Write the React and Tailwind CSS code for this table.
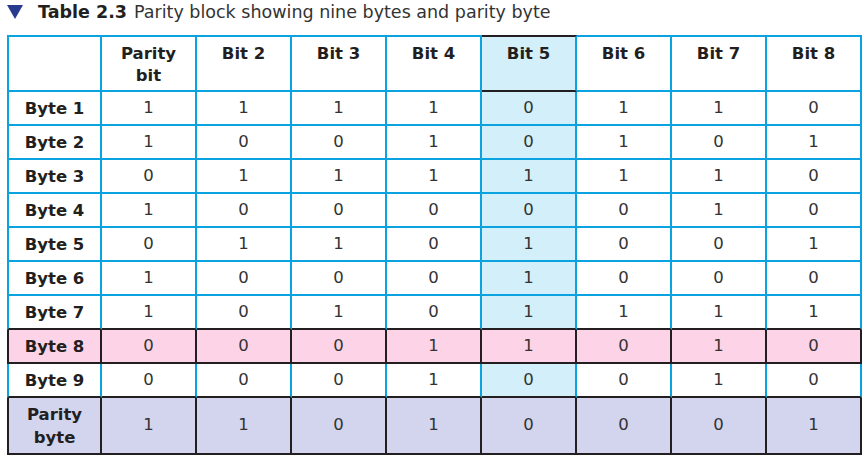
import React from 'react';

const cols = ['Bit 2', 'Bit 3', 'Bit 4', 'Bit 5', 'Bit 6', 'Bit 7', 'Bit 8'];

const rows = [
  { label: 'Byte 1', bits: [1, 1, 1, 1, 0, 1, 1, 0] },
  { label: 'Byte 2', bits: [1, 0, 0, 1, 0, 1, 0, 1] },
  { label: 'Byte 3', bits: [0, 1, 1, 1, 1, 1, 1, 0] },
  { label: 'Byte 4', bits: [1, 0, 0, 0, 0, 0, 1, 0] },
  { label: 'Byte 5', bits: [0, 1, 1, 0, 1, 0, 0, 1] },
  { label: 'Byte 6', bits: [1, 0, 0, 0, 1, 0, 0, 0] },
  { label: 'Byte 7', bits: [1, 0, 1, 0, 1, 1, 1, 1] },
  { label: 'Byte 8', bits: [0, 0, 0, 1, 1, 0, 1, 0], kind: 'pink' },
  { label: 'Byte 9', bits: [0, 0, 0, 1, 0, 0, 1, 0] },
  { label: 'Parity byte', bits: [1, 1, 0, 1, 0, 0, 0, 1], kind: 'parity' },
];

const font = { fontFamily: '"DejaVu Sans", "Liberation Sans", sans-serif' };

const App = () => {
  return (
    <div className="w-[866px] h-[461px] bg-white text-[#231f20]" style={font}>
      {/* Заголовок */}
      <div className="h-[35px] flex items-start pt-[5px] pl-[7px] gap-[15px]">
        <svg width="16" height="14" viewBox="0 0 16 14">
          <polygon points="0,0 16,0 8,14" fill="#283a8e" />
        </svg>
        <div className="text-[17.5px] leading-[18px] -mt-[2px]">
          <span className="font-bold">Table 2.3</span>
          <span className="ml-[7px] text-[#333]">Parity block showing nine bytes and parity byte</span>
        </div>
      </div>

      <table className="ml-[7px] w-[855px] table-fixed border-separate border-spacing-0">
        <thead>
          <tr className="h-[57px]">
            <th className="border-2 border-[#0aa3e0] align-top pt-[6px] text-[16.5px] leading-[22px] font-bold w-[95px]"></th>
            <th className="border-2 border-l-0 border-[#0aa3e0] align-top pt-[6px] text-[16.5px] leading-[22px] font-bold">
              Parity
              <br />
              bit
            </th>
            {cols.map((c) => {
              const hot = c === 'Bit 5';
              return (
                <th
                  key={c}
                  className={
                    'border-2 border-l-0 align-top pt-[6px] text-[16.5px] leading-[22px] font-bold ' +
                    (hot
                      ? 'bg-[#d2effa] border-[#0aa3e0] border-t-[#231f20] border-b-[#231f20]'
                      : 'border-[#0aa3e0]')
                  }
                >
                  {c}
                </th>
              );
            })}
          </tr>
        </thead>
        <tbody>
          {rows.map((r, ri) => {
            const next = rows[ri + 1];
            const blackBottom = r.kind || (next && next.kind);
            const blackSides = !!r.kind;
            const bg =
              r.kind === 'pink' ? 'bg-[#fdd3e8]' : r.kind === 'parity' ? 'bg-[#d3d4ee]' : '';
            return (
              <tr key={r.label} className={r.kind === 'parity' ? 'h-[57px]' : 'h-[34px]'}>
                <td
                  className={
                    'border-b-2 border-r-2 border-l-2 text-center align-middle font-bold text-[16.5px] leading-[23px] ' +
                    bg +
                    ' ' +
                    (blackSides ? 'border-[#231f20]' : 'border-[#0aa3e0]') +
                    ' ' +
                    (blackBottom ? 'border-b-[#231f20]' : '')
                  }
                >
                  {r.label === 'Parity byte' ? (
                    <>
                      Parity
                      <br />
                      byte
                    </>
                  ) : (
                    r.label
                  )}
                </td>
                {r.bits.map((b, bi) => {
                  const hot = bi === 4 && !r.kind;
                  return (
                    <td
                      key={bi}
                      className={
                        'border-b-2 border-r-2 text-center align-middle text-[16.5px] text-[#333] ' +
                        (bg || (hot ? 'bg-[#d2effa]' : '')) +
                        ' ' +
                        (blackSides ? 'border-[#231f20]' : 'border-[#0aa3e0]') +
                        ' ' +
                        (blackBottom ? 'border-b-[#231f20]' : '')
                      }
                    >
                      {b}
                    </td>
                  );
                })}
              </tr>
            );
          })}
        </tbody>
      </table>
    </div>
  );
};

export default App;
